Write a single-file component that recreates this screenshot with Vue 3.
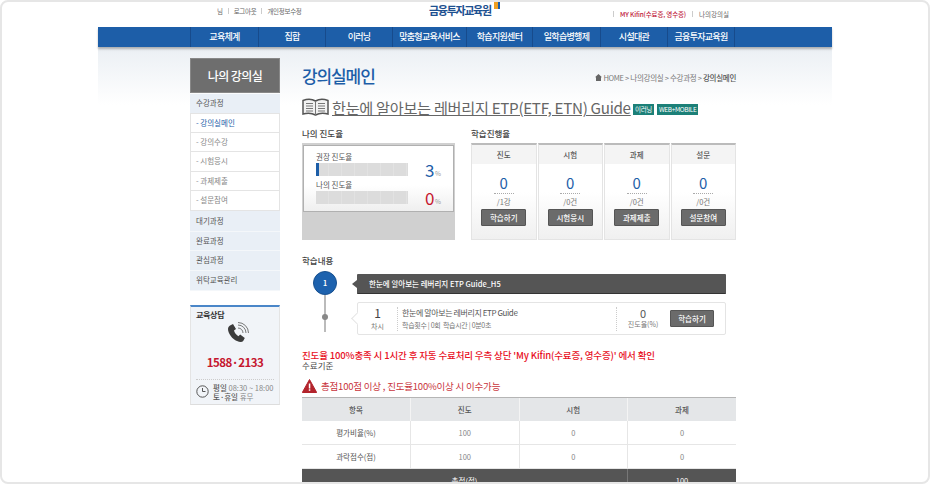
<script setup>
const nav = [
  { name: '교육체계', w: 68 },
  { name: '집합', w: 67 },
  { name: '이러닝', w: 67 },
  { name: '맞춤형교육서비스', w: 74 },
  { name: '학습지원센터', w: 66 },
  { name: '일학습병행제', w: 68 },
  { name: '시설대관', w: 67 },
  { name: '금융투자교육원', w: 68 }
]
const subMenu = ['강의실메인', '강의수강', '시험응시', '과제제출', '설문참여']
const lowerMenu = ['대기과정', '완료과정', '관심과정', '위탁교육관리']
const cards = [
  { head: '진도', total: '/1강', btn: '학습하기' },
  { head: '시험', total: '/0건', btn: '시험응시' },
  { head: '과제', total: '/0건', btn: '과제제출' },
  { head: '설문', total: '/0건', btn: '설문참여' }
]
</script>

<template>
  <div class="page">
    <header class="top">
      <div class="top-left">
        <span>님</span><i></i><span>로그아웃</span><i></i><span>개인정보수정</span>
      </div>
      <div class="logo">
        <span>금융투자교육원</span>
        <svg width="6" height="9" viewBox="0 0 6 9"><rect width="4" height="9" fill="#f0a020"/><rect x="4" width="2" height="9" fill="#1d5ea8"/></svg>
      </div>
      <div class="top-right">
        <i></i><span class="red">MY Kifin(수료증, 영수증)</span><i></i><span class="plain">나의강의실</span>
      </div>
    </header>

    <nav class="nav">
      <a v-for="n in nav" :key="n.name" :style="{ width: n.w + 'px' }">{{ n.name }}</a>
    </nav>

    <div class="body">
      <aside class="side">
        <div class="side-title">나의 강의실</div>
        <div class="side-head">수강과정</div>
        <ul class="sub">
          <li v-for="(s, i) in subMenu" :key="s" :class="{ on: i === 0 }">- {{ s }}</li>
        </ul>
        <div class="lower">
          <div v-for="m in lowerMenu" :key="m" class="side-head low">{{ m }}</div>
        </div>

        <div class="consult">
          <h4>교육상담</h4>
          <svg class="phone" width="24" height="24" viewBox="0 0 24 24">
            <path d="M5 3.500 8 2l3 5-2 1.600c.6 2.200 2.200 4.400 4.400 5.600l1.800-1.700 4.600 3.600-1.600 3c-1.200 1.400-3.600 1.200-6.200 0C7.500 17.300 3 11.500 3 7c0-1.500.8-2.700 2-3.500z" fill="#3c3c3c"/>
            <path d="M13 6a5 5 0 0 1 5 5M13 3a8 8 0 0 1 8 8M13 .5A10.500 10.500 0 0 1 23.500 11" fill="none" stroke="#777" stroke-width="1"/>
          </svg>
          <div class="tel">1588·2133</div>
          <div class="hours">
            <svg width="13" height="13" viewBox="0 0 13 13"><circle cx="6.500" cy="6.500" r="5.700" fill="none" stroke="#555" stroke-width="1"/><path d="M6.500 3v3.500h3" fill="none" stroke="#555" stroke-width="1"/></svg>
            <p><b>평일</b> 08:30 ~ 18:00<br><b>토·휴일</b> 휴무</p>
          </div>
        </div>
      </aside>

      <main class="main">
        <div class="title-row">
          <h2>강의실메인</h2>
          <div class="crumb">
            <svg width="7" height="7" viewBox="0 0 7 7"><path d="M3.500 0 7 3.200H6V7H1V3.200H0z" fill="#666"/></svg>
            HOME &gt; 나의강의실 &gt; 수강과정 &gt; <b>강의실메인</b>
          </div>
        </div>

        <div class="course">
          <svg width="27" height="19" viewBox="0 0 27 19">
            <path d="M1 2.500C5 1 10 1 13.500 3 17 1 22 1 26 2.500V16c-4-1.200-9-1-12.500 1C10 15 5 14.800 1 16z" fill="#f2f2f2" stroke="#555" stroke-width="1.500"/>
            <path d="M13.500 3v14M4 5.500h7M4 8h7M4 10.500h7M4 13h7M16 5.500h7M16 8h7M16 10.500h7M16 13h7" stroke="#777" stroke-width="1" fill="none"/>
          </svg>
          <a>한눈에 알아보는 레버리지 ETP(ETF, ETN) Guide</a>
          <span class="tag first">이러닝</span>
          <span class="tag">WEB+MOBILE</span>
        </div>

        <div class="stats">
          <section class="progress">
            <h5>나의 진도율</h5>
            <div class="progress-box">
              <div class="progress-inner">
                <div class="meter">
                  <label>권장 진도율</label>
                  <div class="meter-row">
                    <div class="bar"><span class="fill"></span></div>
                    <em class="blue">3</em><small>%</small>
                  </div>
                </div>
                <div class="meter">
                  <label>나의 진도율</label>
                  <div class="meter-row">
                    <div class="bar"></div>
                    <em class="crimson">0</em><small>%</small>
                  </div>
                </div>
              </div>
            </div>
          </section>

          <section class="rates">
            <h5>학습진행율</h5>
            <div class="cards">
              <div v-for="c in cards" :key="c.head" class="card">
                <div class="card-head">{{ c.head }}</div>
                <div class="num">0</div>
                <div class="total">{{ c.total }}</div>
                <button class="btn">{{ c.btn }}</button>
              </div>
            </div>
          </section>
        </div>

        <h5 class="content-label">학습내용</h5>
        <div class="timeline">
          <div class="rail">
            <div class="circle">1</div>
            <div class="line"><span></span></div>
          </div>
          <div class="lessons">
            <div class="chapter">한눈에 알아보는 레버리지 ETP Guide_H5</div>
            <div class="lesson">
              <div class="order"><strong>1</strong><span>차시</span></div>
              <div class="info">
                <p>한눈에 알아보는 레버리지 ETP Guide</p>
                <span>학습횟수 | 0회 &nbsp;학습시간 | 0분0초</span>
              </div>
              <div class="rate"><strong>0</strong><span>진도율(%)</span></div>
              <button class="btn">학습하기</button>
            </div>
          </div>
        </div>

        <p class="notice">진도율 100%충족 시 1시간 후 자동 수료처리 우측 상단 'My Kifin(수료증, 영수증)' 에서 확인</p>
        <p class="criteria">수료기준</p>
        <div class="warn">
          <svg width="15" height="14" viewBox="0 0 15 14"><path d="M7.500.5 14.700 13.500H.3z" fill="#b3242c" stroke="#b3242c" stroke-linejoin="round"/><rect x="6.800" y="4.500" width="1.500" height="5" fill="#fff"/><rect x="6.800" y="10.300" width="1.500" height="1.500" fill="#fff"/></svg>
          <span>총점100점 이상 , 진도율100%이상 시 이수가능</span>
        </div>

        <table class="score">
          <colgroup><col class="c1"><col class="c1"><col class="c1"><col class="c1"></colgroup>
          <thead>
            <tr><th>항목</th><th>진도</th><th>시험</th><th>과제</th></tr>
          </thead>
          <tbody>
            <tr><td class="dark-text">평가비율(%)</td><td>100</td><td>0</td><td>0</td></tr>
            <tr><td class="dark-text">과락점수(점)</td><td>100</td><td>0</td><td>0</td></tr>
          </tbody>
          <tfoot>
            <tr><td colspan="3">총점(점)</td><td>100</td></tr>
          </tfoot>
        </table>
      </main>
    </div>
  </div>
</template>

<style>
html, body { margin: 0; background: #fff; overflow: hidden; }
</style>

<style scoped>
.page {
  box-sizing: border-box;
  width: 930px;
  height: 484px;
  border: 2px solid #e6e6e6;
  border-radius: 8px;
  overflow: hidden;
  background: #fff;
  font-family: "Noto Sans CJK KR", "Noto Sans", sans-serif;
  color: #444;
}
h2, h4, h5, p, ul { margin: 0; padding: 0; }
ul { list-style: none; }

.top {
  width: 734px;
  height: 25px;
  margin: 0 auto;
  display: flex;
  font-size: 6.500px;
  letter-spacing: -.3px;
  color: #666;
  overflow: hidden;
}
.top-left {
  width: 331px;
  box-sizing: border-box;
  padding: 2px 0 0 119px;
  display: flex;
  gap: 5px;
  align-items: center;
  height: 16px;
  white-space: nowrap;
}
.top i {
  width: 1px;
  height: 6px;
  background: #ccc;
}
.logo {
  width: 184px;
  display: flex;
  align-items: flex-start;
  gap: 3px;
  color: #1d5090;
  font-size: 11px;
  font-weight: 700;
  line-height: 14px;
  letter-spacing: -1.3px;
  padding-top: 1px;
  box-sizing: border-box;
}
.logo svg { margin-top: -3px; }
.top-right {
  display: flex;
  gap: 6px;
  align-items: center;
  height: 16px;
  padding-top: 4px;
  white-space: nowrap;
}
.top-right .red { color: #c0203a; font-weight: 500; letter-spacing: -.15px; }
.top-right .plain { letter-spacing: 0; }

.nav {
  width: 734px;
  height: 20px;
  margin: 0 auto;
  padding-left: 92px;
  box-sizing: border-box;
  display: flex;
  background: #1d5ea8;
  box-shadow: 0 2px 2px rgba(0, 0, 0, .25);
  position: relative;
}
.nav a {
  box-sizing: border-box;
  border-left: 1px solid #174b8c;
  color: #fff;
  font-size: 9px;
  font-weight: 500;
  line-height: 20px;
  text-align: center;
  white-space: nowrap;
  letter-spacing: -.7px;
}
.nav a:last-child { border-right: 1px solid #174b8c; }

.body {
  width: 734px;
  margin: 0 auto;
  padding: 11px 0 0 92px;
  box-sizing: border-box;
  display: flex;
  gap: 22px;
  background: linear-gradient(#e4e8ec, #edf1f5 6px, #fff 58px);
}
.side { width: 90px; flex: none; }
.side-title {
  height: 35px;
  box-sizing: border-box;
  background: #6e6e6e;
  border: 1px solid #888;
  color: #fff;
  font-size: 12px;
  font-weight: 500;
  line-height: 33px;
  text-align: center;
  letter-spacing: -.6px;
}
.side-head {
  height: 19px;
  margin-top: 1px;
  padding-left: 6px;
  background: #e9eff6;
  font-size: 7.500px;
  line-height: 18px;
  color: #555;
}
.lower { padding-top: 1px; background: #e9eff6; }
.side-head.low { height: 19.700px; margin-top: 0; border-bottom: 1px solid #f4f7fa; box-sizing: border-box; }
.sub { border: 1px solid #e4e4e4; border-width: 0 1px; background: #fff; }
.sub li {
  height: 19.600px;
  box-sizing: border-box;
  padding-left: 5px;
  border-bottom: 1px solid #e4e4e4;
  font-size: 7.500px;
  line-height: 18px;
  color: #888;
}
.sub li.on { color: #1d5ea8; border-top: 1px solid #e4e4e4; }

.consult {
  margin-top: 14px;
  height: 100px;
  box-sizing: border-box;
  border-top: 2px solid #4a86c8;
  border-bottom: 1px solid #ddd;
  border-left: 1px solid #e4e4e4;
  border-right: 1px solid #e4e4e4;
  background: #f1f4f8;
  padding: 2px 5px 0;
  display: flex;
  flex-direction: column;
}
.consult h4 { font-size: 8px; font-weight: 700; color: #333; line-height: 12px; letter-spacing: -.3px; }
.phone { align-self: center; margin: 1px 0 0 3px; flex: none; }
.tel {
  text-align: center;
  color: #c5162e;
  font-size: 11.500px;
  font-weight: 700;
  line-height: 16px;
  margin-top: 8px;
  letter-spacing: -.5px;
}
.hours {
  margin-top: 9px;
  padding-top: 3px;
  border-top: 1px dotted #ccc;
  display: flex;
  gap: 4px;
  align-items: center;
  font-size: 7.500px;
  line-height: 9px;
  color: #888;
  white-space: nowrap;
}
.hours b { color: #555; font-weight: 500; }

.main { width: 434px; flex: none; }
.title-row {
  display: flex;
  justify-content: space-between;
  align-items: center;
  height: 36px;
}
h2 {
  color: #1d5ea8;
  font-size: 17px;
  font-weight: 500;
  letter-spacing: -1.1px;
  line-height: 36px;
}
.crumb { font-size: 7.500px; color: #777; padding-top: 3px; letter-spacing: -.3px; }
.crumb b { font-weight: 500; color: #555; }

.course {
  height: 24px;
  display: flex;
  align-items: center;
  margin-top: 1px;
}
.course svg { flex: none; margin-right: 3px; }
.course a {
  font-size: 15.200px;
  color: #666;
  text-decoration: underline;
  white-space: nowrap;
  line-height: 22px;
  letter-spacing: -.02em;
  width: 301px;
}
.tag {
  height: 11px;
  background: #1c8078;
  color: #fff;
  font-size: 6.500px;
  line-height: 11px;
  padding: 0 2px;
  margin: 5px 0 0 3px;
  white-space: nowrap;
  letter-spacing: -.35px;
}
.tag.first { margin-left: 0; }

.stats { display: flex; gap: 16px; margin-top: 8px; }
h5 {
  font-size: 8.500px;
  font-weight: 500;
  color: #444;
  line-height: 12px;
  height: 16px;
}
.progress { width: 153px; }
.progress-box {
  height: 97px;
  background: #d0d0d0;
  padding: 2px 1px 0;
  box-sizing: border-box;
}
.progress-inner {
  height: 67px;
  box-sizing: border-box;
  background: linear-gradient(#fff 60%, #efefef);
  border: 1px solid #b0b0b0;
  padding: 5px 0 0 12px;
  display: flex;
  flex-direction: column;
  gap: 2px;
}
.meter label { display: block; font-size: 7.500px; line-height: 11px; color: #555; }
.meter-row { display: flex; align-items: center; height: 15px; }
.bar {
  width: 92px;
  height: 13px;
  background: repeating-linear-gradient(90deg, #dcdcdc 0 12px, #e2e2e2 12px 13px);
  flex: none;
}
.fill { display: block; width: 3px; height: 100%; background: #1d5ea8; }
.meter-row em {
  font-style: normal;
  font-size: 17px;
  margin-left: 17px;
  line-height: 15px;
  width: 10px;
  padding-top: 0;
}
.meter-row small { font-size: 6.500px; color: #999; padding-top: 6px; }
.blue { color: #1d5ea8; }
.crimson { color: #c5162e; }

.rates { width: 265px; }
.cards { display: flex; gap: 1px; }
.card {
  width: 65.500px;
  height: 97px;
  box-sizing: border-box;
  border: 1px solid #e4e4e4;
  border-top: 2px solid #bbb;
  background: linear-gradient(#fff 50%, #f0f0f0);
  display: flex;
  flex-direction: column;
  align-items: center;
}
.card-head {
  align-self: stretch;
  height: 19px;
  background: #f4f4f4;
  font-size: 7.500px;
  line-height: 19px;
  text-align: center;
  font-weight: 500;
  color: #555;
}
.num {
  width: 20px;
  margin-top: 9px;
  height: 20px;
  border-bottom: 1px dotted #aaa;
  color: #1d5ea8;
  font-size: 15px;
  line-height: 20px;
  text-align: center;
}
.total { font-size: 7.500px; color: #777; line-height: 13px; margin-top: 1px; }
.btn {
  width: 45px;
  height: 17px;
  padding: 0;
  border: 1px solid #555;
  border-radius: 1px;
  background: #6b6b6b;
  color: #fff;
  font-family: inherit;
  font-size: 7.500px;
  font-weight: 500;
  line-height: 15px;
  margin-top: 1px;
}

.content-label { margin-top: 14px; height: 17px; }
.timeline { display: flex; }
.rail {
  width: 44px;
  margin-left: 11px;
  flex: none;
  display: flex;
  flex-direction: column;
  align-items: flex-start;
}
.circle {
  width: 24px;
  height: 24px;
  border-radius: 50%;
  background: #1d62ae;
  border: 1px solid #17508f;
  box-sizing: border-box;
  color: #fff;
  font-size: 7px;
  font-weight: 700;
  line-height: 22px;
  text-align: center;
}
.line {
  width: 2px;
  height: 37px;
  background: #bbb;
  margin-left: 11px;
  position: relative;
}
.line span {
  position: absolute;
  left: -2px;
  top: 19px;
  width: 6px;
  height: 6px;
  border-radius: 50%;
  background: #888;
}
.lessons { width: 369px; flex: none; padding-top: 3px; }
.chapter {
  height: 20px;
  background: #555;
  border-bottom: 1px solid #333;
  border-radius: 1px;
  color: #fff;
  font-size: 7.500px;
  font-weight: 500;
  line-height: 20px;
  padding-left: 12px;
  box-sizing: border-box;
  position: relative;
}
.chapter::before {
  content: '';
  position: absolute;
  left: -5px;
  top: 6px;
  border: 4px solid transparent;
  border-left: 0;
  border-right: 5px solid #555;
}
.lesson {
  margin-top: 8px;
  height: 33px;
  box-sizing: border-box;
  border: 1px solid #e4e4e4;
  border-radius: 2px;
  display: flex;
  align-items: center;
  position: relative;
  background: #fff;
}
.lesson::before {
  content: '';
  position: absolute;
  left: -5px;
  top: 11px;
  width: 8px;
  height: 8px;
  background: #fff;
  border: 1px solid #e4e4e4;
  border-width: 0 0 1px 1px;
  transform: rotate(45deg);
}
.order {
  width: 39px;
  flex: none;
  text-align: center;
  line-height: 9px;
}
.order strong { display: block; font-size: 12px; font-weight: 400; line-height: 11px; color: #444; }
.order span { font-size: 7px; color: #777; }
.info {
  width: 219px;
  flex: none;
  height: 24px;
  box-sizing: border-box;
  border-left: 1px dotted #ccc;
  padding-left: 4px;
  font-size: 7px;
  color: #777;
  line-height: 12px;
  white-space: nowrap;
  letter-spacing: -.3px;
}
.info p { font-size: 8px; line-height: 12px; color: #555; letter-spacing: -.4px; }
.rate {
  width: 53px;
  flex: none;
  height: 24px;
  box-sizing: border-box;
  border-left: 1px dotted #ccc;
  text-align: center;
  line-height: 8px;
  font-size: 7px;
  color: #777;
  white-space: nowrap;
}
.rate strong { display: block; font-size: 11px; font-weight: 400; line-height: 13px; color: #555; }
.lesson .btn { height: 17px; margin: 0 0 0 1px; width: 44px; }

.notice {
  margin-top: 15px;
  color: #e8101e;
  font-size: 9.500px;
  line-height: 11px;
  font-weight: 500;
  white-space: nowrap;
  letter-spacing: -.14px;
}
.criteria { font-size: 8.500px; color: #444; line-height: 9px; }
.warn {
  display: flex;
  align-items: center;
  gap: 4px;
  margin-top: 8px;
  height: 15px;
  color: #c8343c;
  font-size: 9.500px;
  letter-spacing: -.2px;
  white-space: nowrap;
}
.score {
  width: 434px;
  margin-top: 4px;
  border-collapse: collapse;
  table-layout: fixed;
  font-size: 7.500px;
  text-align: center;
}
.c1 { width: 25%; }
.score th {
  height: 23px;
  padding: 0;
  background: #e4e6e8;
  border-top: 1px solid #b5b5b5;
  border-left: 1px solid #f4f4f4;
  font-weight: 500;
  color: #555;
}
.score td {
  height: 23px;
  padding: 0;
  color: #888;
  border-bottom: 1px solid #e6e6e6;
  border-left: 1px solid #e6e6e6;
}
.score th:first-child, .score td:first-child { border-left: 0; }
.score td.dark-text { color: #555; }
.score tfoot td {
  background: #555;
  color: #fff;
  border: 0;
  border-left: 1px solid #777;
  border-top: 1px solid #bbb;
}
</style>
